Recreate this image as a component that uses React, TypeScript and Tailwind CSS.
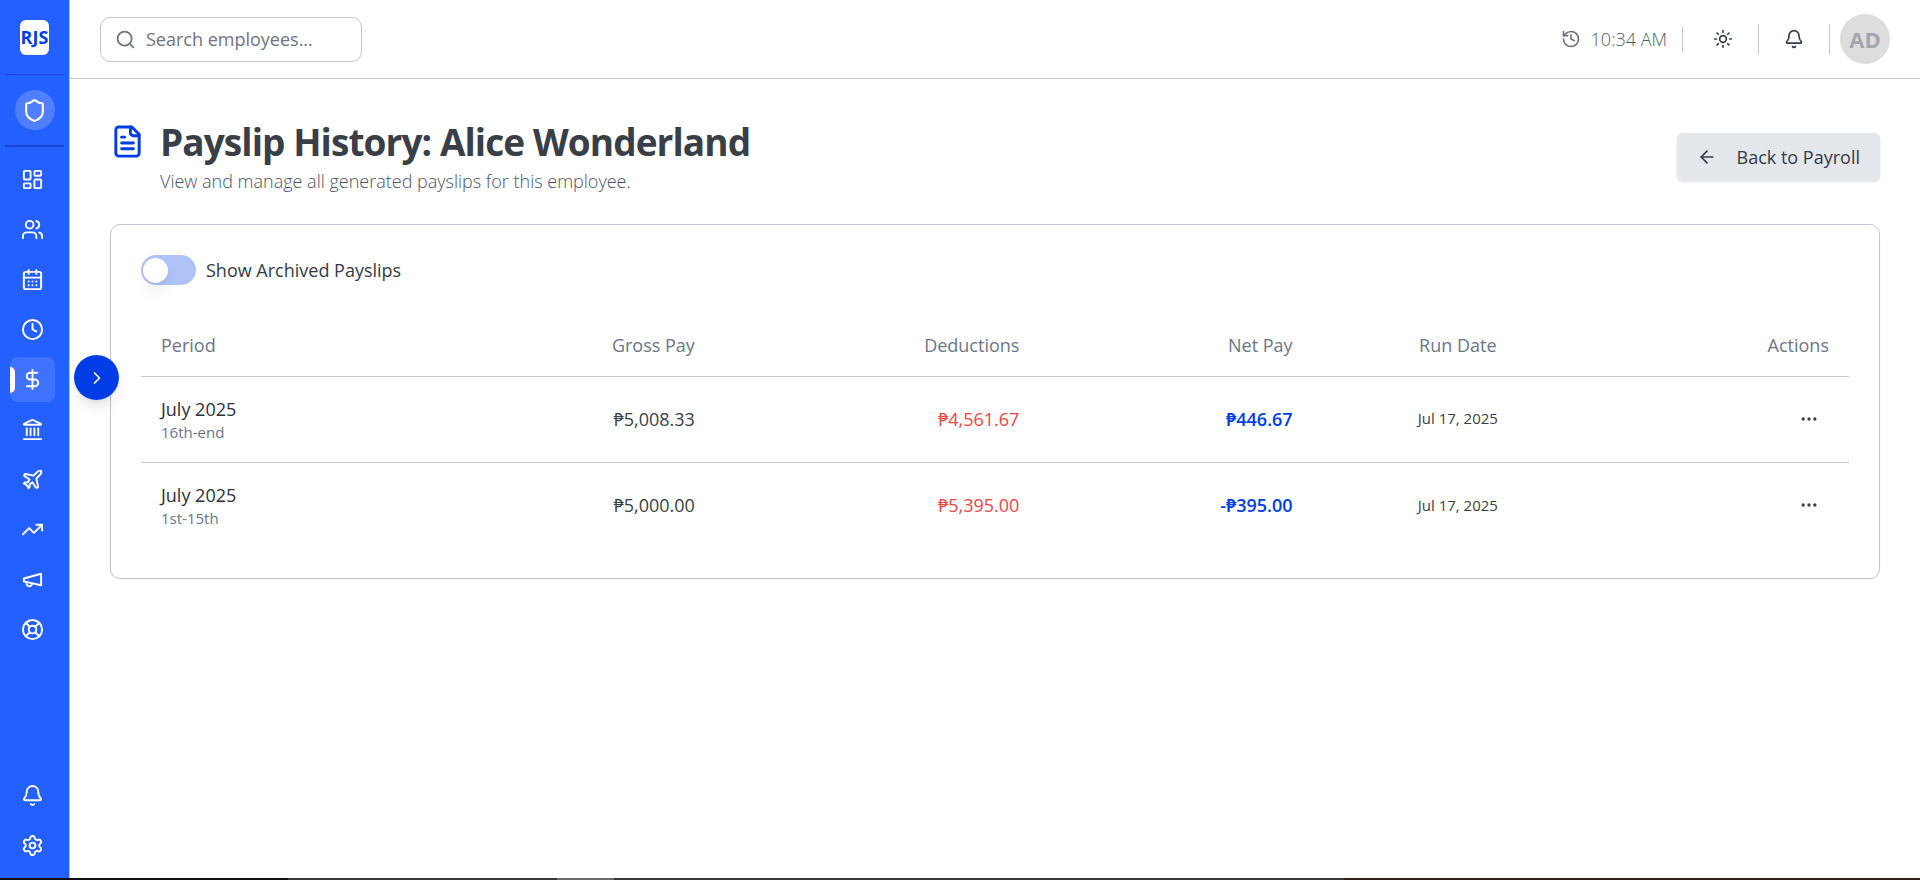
import { useState } from 'react';
import type { ReactNode } from 'react';
import {
  ArrowLeft,
  Bell,
  CalendarDays,
  ChevronRight,
  Clock,
  DollarSign,
  Ellipsis,
  History,
  Landmark,
  LayoutDashboard,
  LifeBuoy,
  Plane,
  Search,
  Settings,
  Shield,
  Sun,
  TrendingUp,
  Users,
} from 'lucide-react';

interface Payslip {
  id: number;
  period: string;
  cutoff: string;
  gross: string;
  deductions: string;
  net: string;
  runDate: string;
}

const payslips: Payslip[] = [
  {
    id: 1,
    period: 'July 2025',
    cutoff: '16th-end',
    gross: '₱5,008.33',
    deductions: '₱4,561.67',
    net: '₱446.67',
    runDate: 'Jul 17, 2025',
  },
  {
    id: 2,
    period: 'July 2025',
    cutoff: '1st-15th',
    gross: '₱5,000.00',
    deductions: '₱5,395.00',
    net: '-₱395.00',
    runDate: 'Jul 17, 2025',
  },
];

interface IconProps {
  size: number;
}

function MegaphoneIcon({ size }: IconProps) {
  return (
    <svg
      width={size}
      height={size}
      viewBox="0 0 24 24"
      fill="none"
      stroke="currentColor"
      strokeWidth="2"
      strokeLinecap="round"
      strokeLinejoin="round"
    >
      <path d="m3 11 18-5v12L3 14v-3z" />
      <path d="M11.6 16.8a3 3 0 1 1-5.8-1.6" />
    </svg>
  );
}

function PayslipIcon({ size }: IconProps) {
  return (
    <svg
      width={size}
      height={size}
      viewBox="0 0 24 24"
      fill="none"
      stroke="currentColor"
      strokeWidth="2"
      strokeLinecap="round"
      strokeLinejoin="round"
      className="mt-[5px] text-[#003de6]"
    >
      <path d="M15 2H6a2 2 0 0 0-2 2v16a2 2 0 0 0 2 2h12a2 2 0 0 0 2-2V7Z" />
      <path d="M14 2v4a2 2 0 0 0 2 2h4" />
      <path d="M10 9H8" />
      <path d="M16 13H8" />
      <path d="M16 17H8" />
    </svg>
  );
}

const mainNav = [
  { label: 'Dashboard', icon: LayoutDashboard },
  { label: 'Employees', icon: Users },
  { label: 'Calendar', icon: CalendarDays },
  { label: 'Attendance', icon: Clock },
  { label: 'Payroll', icon: DollarSign },
  { label: 'Government', icon: Landmark },
  { label: 'Leaves', icon: Plane },
  { label: 'Performance', icon: TrendingUp },
  { label: 'Announcements', icon: MegaphoneIcon },
  { label: 'Support', icon: LifeBuoy },
];

const footerNav = [
  { label: 'Notifications', icon: Bell },
  { label: 'Settings', icon: Settings },
];

interface NavItemProps {
  label: string;
  active?: boolean;
  children: ReactNode;
}

function NavItem({ label, active, children }: NavItemProps) {
  return (
    <a
      href="#"
      aria-label={label}
      className={
        active
          ? 'relative flex h-[45px] w-[45px] items-center justify-center rounded-lg bg-white/12'
          : 'relative flex h-[45px] w-[45px] items-center justify-center rounded-lg hover:bg-white/10'
      }
    >
      {active && <span className="absolute left-0 h-[26px] w-[5px] rounded-r-md bg-white" />}
      {children}
    </a>
  );
}

function Sidebar() {
  return (
    <aside className="relative flex w-[70px] shrink-0 flex-col border-r border-[#c4c4cf] bg-[#245fff] text-white">
      <div className="mx-[5px] flex h-[75px] items-center justify-center border-b border-[#1a46d6]">
        <div className="flex h-[35px] w-[29px] items-center justify-center rounded-md bg-white text-lg font-bold text-[#003de6]">
          RJS
        </div>
      </div>
      <div className="mx-[5px] flex h-[72px] items-center justify-center border-b-2 border-[#1a46d6]">
        <div className="flex h-10 w-10 items-center justify-center rounded-full bg-white/20">
          <Shield size={25} />
        </div>
      </div>
      <nav className="flex flex-1 flex-col gap-[5px] pt-[10px] pl-[10px]">
        {mainNav.map(({ label, icon: Icon }) => (
          <NavItem key={label} label={label} active={label === 'Payroll'}>
            <Icon size={23} />
          </NavItem>
        ))}
      </nav>
      <div className="flex flex-col gap-[5px] pb-[10px] pl-[10px]">
        {footerNav.map(({ label, icon: Icon }) => (
          <NavItem key={label} label={label}>
            <Icon size={23} />
          </NavItem>
        ))}
      </div>
      <button
        aria-label="Expand sidebar"
        className="absolute top-[355px] left-[74px] flex h-[45px] w-[45px] items-center justify-center rounded-full bg-[#003de6] shadow-lg"
      >
        <ChevronRight size={20} />
      </button>
    </aside>
  );
}

function Topbar() {
  return (
    <header className="flex h-[79px] items-center justify-between border-b border-[#c4c4cf] px-[30px]">
      <label className="flex h-[45px] w-[262px] items-center gap-[10px] rounded-[10px] border border-[#c4c4cf] px-[14px] text-[#6d7482]">
        <Search size={21} className="shrink-0" />
        <input
          type="text"
          aria-label="Search employees"
          placeholder="Search employees..."
          className="w-full min-w-0 bg-transparent text-lg outline-none placeholder:text-[#6d7482]"
        />
      </label>
      <div className="flex items-center text-[#333b47]">
        <div className="flex items-center gap-[10px] text-[#6d7482]">
          <History size={20} />
          <span className="text-lg font-light text-[#555c6a]">10:34 AM</span>
        </div>
        <span className="ml-[15px] h-[25px] w-px bg-[#c4c4cf]" />
        <button aria-label="Toggle theme" className="ml-[15px] flex h-[50px] w-[50px] items-center justify-center">
          <Sun size={20} />
        </button>
        <span className="ml-[10px] h-[30px] w-px bg-[#c4c4cf]" />
        <button aria-label="Notifications" className="ml-[10px] flex h-[50px] w-[50px] items-center justify-center">
          <Bell size={20} />
        </button>
        <span className="ml-[10px] h-[30px] w-px bg-[#c4c4cf]" />
        <button
          aria-label="Account"
          className="ml-[10px] flex h-[50px] w-[50px] items-center justify-center rounded-full bg-[#dddddd] text-[22px] font-bold text-[#a3a5ab]"
        >
          AD
        </button>
      </div>
    </header>
  );
}

function PayslipTable() {
  return (
    <table className="mt-[30px] w-full table-fixed text-lg">
      <colgroup>
        <col />
        <col className="w-[15%]" />
        <col className="w-[19%]" />
        <col className="w-[16%]" />
        <col className="w-[17%]" />
        <col className="w-[246px]" />
      </colgroup>
      <thead>
        <tr className="h-[61px] border-b border-[#c8c8cc] text-[#6b7686]">
          <th className="px-5 text-left font-medium">Period</th>
          <th className="px-5 text-right font-medium">Gross Pay</th>
          <th className="px-5 text-right font-medium">Deductions</th>
          <th className="px-5 text-right font-medium">Net Pay</th>
          <th className="px-5 text-center font-medium">Run Date</th>
          <th className="px-5 text-right font-medium">Actions</th>
        </tr>
      </thead>
      <tbody>
        {payslips.map((slip) => (
          <tr key={slip.id} className="h-[86px] border-b border-[#c8c8cc] text-[#3a3f47] last:border-b-0">
            <td className="px-5">
              <div className="leading-[25px] font-medium text-[#2b303a]">{slip.period}</div>
              <div className="text-[15px] leading-5 text-[#6b7686]">{slip.cutoff}</div>
            </td>
            <td className="px-5 text-right">{slip.gross}</td>
            <td className="px-5 text-right text-[#ef4444]">{slip.deductions}</td>
            <td className="px-5 text-right font-semibold text-[#003de6]">{slip.net}</td>
            <td className="px-5 text-center text-[15px]">{slip.runDate}</td>
            <td className="px-5">
              <button aria-label="Payslip actions" className="ml-auto flex h-10 w-10 items-center justify-center">
                <Ellipsis size={20} />
              </button>
            </td>
          </tr>
        ))}
      </tbody>
    </table>
  );
}

export default function App() {
  const [showArchived, setShowArchived] = useState(false);

  return (
    <div className="flex min-h-screen flex-col bg-white font-['Open_Sans','Noto_Sans',sans-serif]">
      <div className="flex flex-1">
        <Sidebar />
        <div className="min-w-0 flex-1">
          <Topbar />
          <main className="px-10 pt-10">
            <div className="flex items-center justify-between">
              <div className="flex gap-[15px]">
                <PayslipIcon size={35} />
                <div>
                  <h1 className="text-[37px] leading-[45px] font-bold tracking-tight text-[#3a3f47]">
                    Payslip History: Alice Wonderland
                  </h1>
                  <p className="mt-1 text-lg leading-[26px] font-light text-[#4b5666]">
                    View and manage all generated payslips for this employee.
                  </p>
                </div>
              </div>
              <button className="flex h-12 items-center gap-5 rounded-md bg-[#e4e7ec] px-5 text-lg font-medium text-[#333b47] shadow-sm">
                <ArrowLeft size={20} />
                Back to Payroll
              </button>
            </div>
            <section className="mt-[30px] rounded-[10px] border border-[#c4c4cf] p-[30px] shadow-xs">
              <label className="flex w-fit items-center gap-[10px] text-lg font-medium text-[#333b47]">
                <input
                  type="checkbox"
                  role="switch"
                  checked={showArchived}
                  onChange={(e) => setShowArchived(e.target.checked)}
                  className="peer sr-only"
                />
                <span className="flex h-[30px] w-[55px] items-center rounded-full bg-[#b0c3f8] px-[2px] peer-checked:justify-end peer-checked:bg-[#003de6]">
                  <span className="h-[25px] w-[25px] rounded-full bg-white shadow-lg" />
                </span>
                Show Archived Payslips
              </label>
              <PayslipTable />
            </section>
          </main>
        </div>
      </div>
      <div className="flex h-[2px] bg-[#373737]">
        <span className="w-[15%] bg-[#101010]" />
        <span className="ml-[14%] w-[3%] bg-[#6b6b6b]" />
        <span className="ml-auto w-[30%] bg-[#33221a]" />
      </div>
    </div>
  );
}
